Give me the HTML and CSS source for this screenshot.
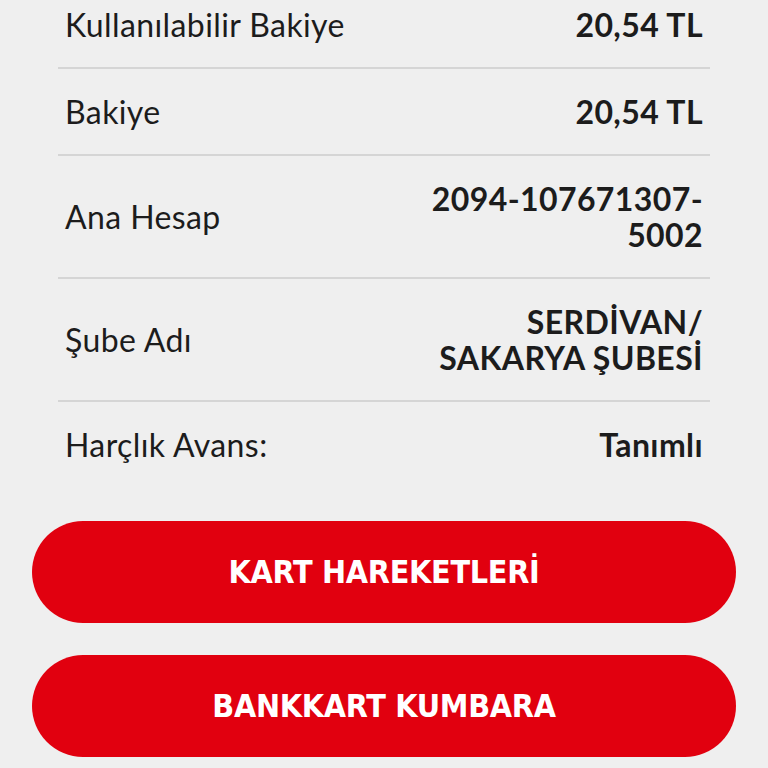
FILE: index.html
```html
<!DOCTYPE html>
<html lang="tr">
<head>
    <meta charset="UTF-8">
    <meta name="viewport" content="width=device-width, initial-scale=1.0">
    <title>Kart Detayı</title>
    <link rel="stylesheet" href="styles.css">
</head>
<body>
    <div class="card-details">
        <div class="detail-list">
            <div class="detail-row">
                <span class="detail-label">Kullanılabilir Bakiye</span>
                <span class="detail-value">20,54 TL</span>
            </div>
            <div class="detail-row">
                <span class="detail-label">Bakiye</span>
                <span class="detail-value">20,54 TL</span>
            </div>
            <div class="detail-row">
                <span class="detail-label">Ana Hesap</span>
                <span class="detail-value">2094-107671307-5002</span>
            </div>
            <div class="detail-row">
                <span class="detail-label">Şube Adı</span>
                <span class="detail-value">SERDİVAN/ SAKARYA ŞUBESİ</span>
            </div>
            <div class="detail-row">
                <span class="detail-label">Harçlık Avans:</span>
                <span class="detail-value">Tanımlı</span>
            </div>
        </div>

        <div class="action-list">
            <button class="action-btn">KART HAREKETLERİ</button>
            <button class="action-btn">BANKKART KUMBARA</button>
        </div>
    </div>
</body>
</html>
```

FILE: styles.css
```css
:root {
    --page-bg: #efefef;
    --text-dark: #1c1c1c;
    --divider: #d5d5d5;
    --brand-red: #e1000f;
}

body {
    background-color: var(--page-bg);
    color: var(--text-dark);
    font-family: 'Lato', 'Noto Sans', sans-serif;
    margin: 0;
    overflow: hidden;
}

.card-details {
    margin-top: -18px;
}

.detail-list {
    padding: 0 58px;
}

.detail-row {
    display: flex;
    justify-content: space-between;
    align-items: center;
    padding: 25px 7px 24px;
    border-bottom: 2px solid var(--divider);
}

.detail-row:last-child {
    border-bottom: none;
}

.detail-label {
    font-size: 32px;
    line-height: 36px;
    letter-spacing: 0.4px;
}

.detail-value {
    font-size: 32px;
    line-height: 36px;
    font-weight: 700;
    letter-spacing: 0.4px;
    text-align: right;
    max-width: 300px;
}

.action-list {
    display: flex;
    flex-direction: column;
    gap: 32px;
    padding: 34px 32px 0;
}

.action-btn {
    height: 102px;
    border: none;
    border-radius: 51px;
    background: var(--brand-red);
    color: #fff;
    font-family: 'Liberation Sans Narrow', 'DejaVu Sans Condensed', sans-serif;
    font-size: 32px;
    font-weight: 700;
    letter-spacing: -0.3px;
    cursor: pointer;
}
```
